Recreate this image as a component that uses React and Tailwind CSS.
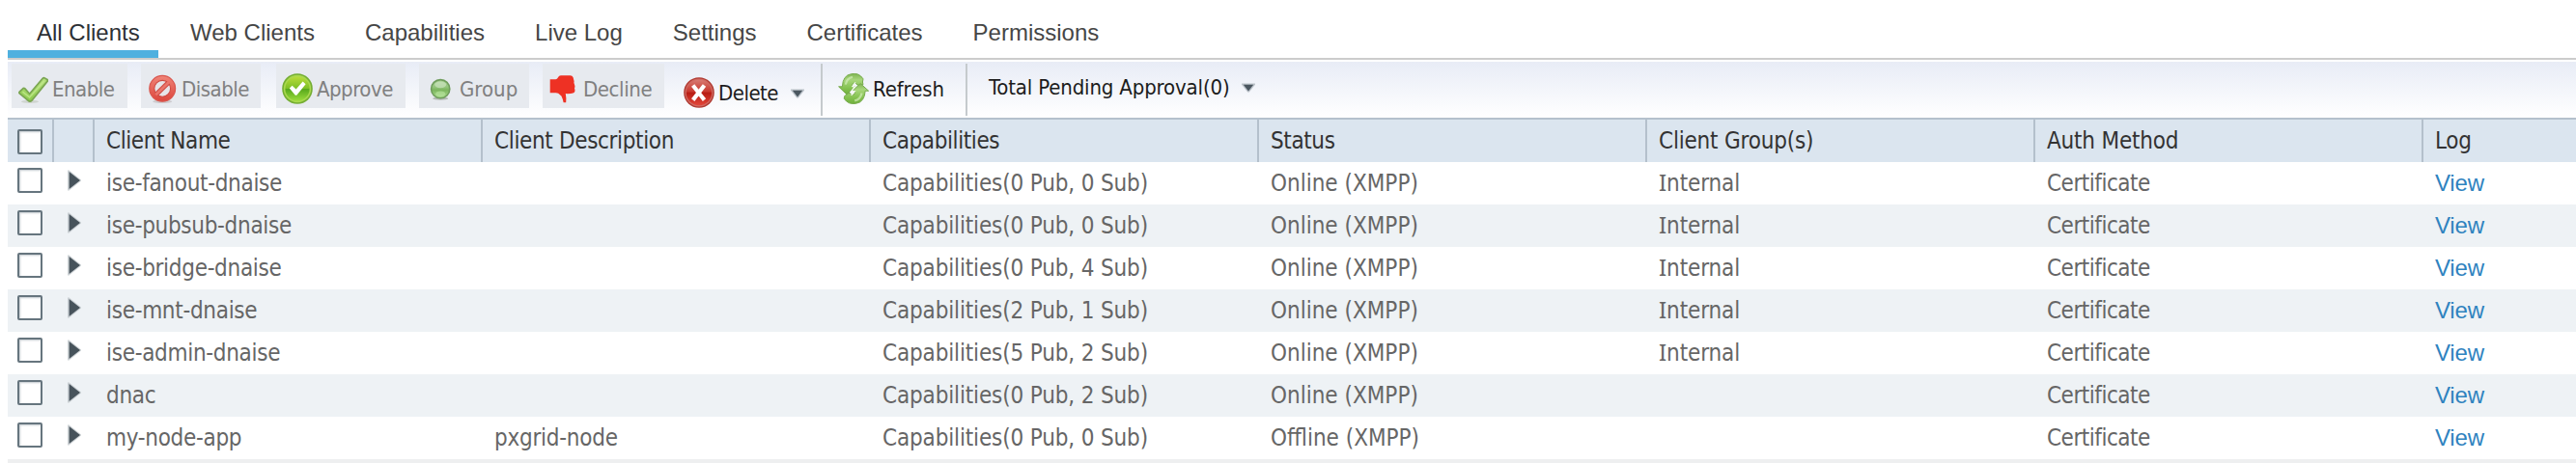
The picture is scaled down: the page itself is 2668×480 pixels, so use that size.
import React from "react";

const TABS = ["All Clients", "Web Clients", "Capabilities", "Live Log", "Settings", "Certificates", "Permissions"];

const COLUMNS = [
  { label: "Client Name", width: "w-[402px]", tracking: "tracking-[-0.43px]" },
  { label: "Client Description", width: "w-[402px]", tracking: "tracking-[-0.35px]" },
  { label: "Capabilities", width: "w-[402px]", tracking: "tracking-[-0.4px]" },
  { label: "Status", width: "w-[402px]", tracking: "tracking-[-0.38px]" },
  { label: "Client Group(s)", width: "w-[402px]", tracking: "tracking-[-0.2px]" },
  { label: "Auth Method", width: "w-[402px]", tracking: "tracking-[-0.2px]" },
  { label: "Log", width: "w-[160px]", tracking: "tracking-[-0.3px]" },
];

const ROWS = [
  { name: "ise-fanout-dnaise", desc: "", caps: "Capabilities(0 Pub, 0 Sub)", status: "Online (XMPP)", internal: true },
  { name: "ise-pubsub-dnaise", desc: "", caps: "Capabilities(0 Pub, 0 Sub)", status: "Online (XMPP)", internal: true },
  { name: "ise-bridge-dnaise", desc: "", caps: "Capabilities(0 Pub, 4 Sub)", status: "Online (XMPP)", internal: true },
  { name: "ise-mnt-dnaise", desc: "", caps: "Capabilities(2 Pub, 1 Sub)", status: "Online (XMPP)", internal: true },
  { name: "ise-admin-dnaise", desc: "", caps: "Capabilities(5 Pub, 2 Sub)", status: "Online (XMPP)", internal: true },
  { name: "dnac", desc: "", caps: "Capabilities(0 Pub, 2 Sub)", status: "Online (XMPP)", internal: false },
  { name: "my-node-app", desc: "pxgrid-node", caps: "Capabilities(0 Pub, 0 Sub)", status: "Offline (XMPP)", internal: false },
];

function EnableIcon() {
  return (
    <svg viewBox="0 0 32 32" className="size-8 shrink-0">
      <defs>
        <linearGradient id="enableFill" x1="0" y1="0" x2="0" y2="1">
          <stop offset="0" stopColor="#b5e07c" />
          <stop offset="1" stopColor="#8ccb4c" />
        </linearGradient>
      </defs>
      <ellipse cx="13" cy="29.4" rx="9" ry="1.6" fill="#cfd4d0" />
      <path d="M2.2 19.2 6 15.6q1-.6 1.900.3l4.700 5.300L26.200 5.300q1-1 2.100-.4l2.600 1.600q.9.8.1 1.900L15 28.200q-2 2-4 0L2.300 21q-.8-.9-.1-1.800z" fill="url(#enableFill)" stroke="#7aa552" strokeWidth="1.7" />
      <path d="M5.400 19.200l7.200 5.600L28 7.600" fill="none" stroke="#c6ea94" strokeWidth="1.6" opacity=".7" />
    </svg>
  );
}

function DisableIcon() {
  return (
    <svg viewBox="0 0 32 32" className="size-8 shrink-0">
      <defs>
        <linearGradient id="disableFill" x1="0" y1="0" x2="0" y2="1">
          <stop offset="0" stopColor="#f08478" />
          <stop offset="1" stopColor="#dc453c" />
        </linearGradient>
      </defs>
      <ellipse cx="16.2" cy="29.3" rx="10" ry="1.8" fill="#cdcbce" />
      <circle cx="16.2" cy="15.8" r="13.4" fill="url(#disableFill)" stroke="#d9574f" strokeWidth="1.2" />
      <circle cx="16.2" cy="15.8" r="8.4" fill="#e7e4e8" stroke="#cf4a42" strokeWidth="1.1" />
      <path d="M10 21.7 22.2 9.7" stroke="#cf4a42" strokeWidth="5" />
      <path d="M9.4 22.3 22.8 9.2" stroke="#ea756b" strokeWidth="2.8" />
    </svg>
  );
}

function ApproveIcon() {
  return (
    <svg viewBox="0 0 32 32" className="size-8 shrink-0">
      <defs>
        <linearGradient id="approveFill" x1="0" y1="0" x2="0" y2="1">
          <stop offset="0" stopColor="#b9dc3a" />
          <stop offset=".5" stopColor="#7cbf26" />
          <stop offset=".52" stopColor="#58a81c" />
          <stop offset="1" stopColor="#9bdc3c" />
        </linearGradient>
      </defs>
      <circle cx="16" cy="16" r="15.8" fill="#74ad32" />
      <circle cx="16" cy="16" r="14.2" fill="#a9d84e" />
      <circle cx="16" cy="16" r="12.6" fill="url(#approveFill)" />
      <path d="M7.800 15.600l2.800-2.800 4 3.800 7-8.200 3 2.800-8.900 11q-1.200 1-2.300 0z" fill="#fff" />
    </svg>
  );
}

function GroupIcon() {
  return (
    <svg viewBox="0 0 32 32" className="size-8 shrink-0">
      <defs>
        <linearGradient id="groupFill" x1="0" y1="0" x2="0" y2="1">
          <stop offset="0" stopColor="#a9d094" />
          <stop offset=".4" stopColor="#93c47b" />
          <stop offset=".55" stopColor="#7cb55e" />
          <stop offset="1" stopColor="#a8dc8c" />
        </linearGradient>
      </defs>
      <ellipse cx="16.2" cy="26.2" rx="8" ry="1.6" fill="#b4b9b5" />
      <circle cx="16.2" cy="16.2" r="9.6" fill="url(#groupFill)" stroke="#6f9d5c" strokeWidth="1.6" />
      <ellipse cx="16.2" cy="11.8" rx="6" ry="3.4" fill="#d3e8c9" opacity=".6" />
      <ellipse cx="16.2" cy="21.2" rx="5" ry="2.8" fill="#bfeaa5" opacity=".55" />
    </svg>
  );
}

function DeclineIcon() {
  return (
    <svg viewBox="0 0 32 32" className="size-8 shrink-0">
      <path d="M1.700 6.200h5.600q1.200 0 2-1l1.200-1.600q1-1.300 2.600-1.300h9.500q2.200 0 3 2l.9 3.400q.3 1-.1 2l1 3.200q.3 1.400-.4 2.400l.4 1.800q.5 2.600-1.900 3.400-2.400.8-7.700.6.9 4.900.4 9.100H15.600q-.7-3.600-2.200-6.600l-3.200-2.800-2.400-.6H1.700z" fill="#ee3124" />
    </svg>
  );
}

function DeleteIcon() {
  return (
    <svg viewBox="0 0 32 32" className="size-8 shrink-0">
      <defs>
        <linearGradient id="deleteFill" x1="0" y1="0" x2="0" y2="1">
          <stop offset="0" stopColor="#d77a72" />
          <stop offset=".45" stopColor="#c93a30" />
          <stop offset=".52" stopColor="#b81d14" />
          <stop offset="1" stopColor="#e2463a" />
        </linearGradient>
      </defs>
      <circle cx="16" cy="16" r="15.8" fill="#b03a32" />
      <circle cx="16" cy="16" r="14.4" fill="#d06a62" />
      <circle cx="16" cy="16" r="13.2" fill="url(#deleteFill)" />
      <path d="M11 10.200 20.200 22M20.200 10.200 11 22" stroke="#fff" strokeWidth="4.200" strokeLinecap="square" />
    </svg>
  );
}

function RefreshIcon() {
  return (
    <svg viewBox="0 0 32 32" className="size-8 shrink-0">
      <defs>
        <linearGradient id="refreshFill" x1="0" y1="0" x2="0" y2="1">
          <stop offset="0" stopColor="#7fb552" />
          <stop offset=".3" stopColor="#a8d67c" />
          <stop offset=".7" stopColor="#84c250" />
          <stop offset="1" stopColor="#6fae3c" />
        </linearGradient>
      </defs>
      <path d="M.6 13.800H4.400Q5 2 13.600.7 21.500-1 26 5.800L25.400 9 26 11.600 20 12.200 18 9.800 15.200 10.800 14.600 13.600 17.400 13.800 9 22Z" fill="url(#refreshFill)" stroke="#78ab4e" strokeWidth="1" />
      <path d="M31.600 18.200H28.200Q27.400 30 18.600 31.300 10.600 32.800 6.200 26.200L6.800 23.400 12 20.200 14.200 22.600 17 21.400 17.600 18.400 14.800 18.200 23.200 10.600Z" fill="url(#refreshFill)" stroke="#78ab4e" strokeWidth="1" />
      <path d="M18 9.400 15 13.600 17.400 14 14 18.400 17.200 18.600 13.600 22.800" fill="none" stroke="#f3f9ee" strokeWidth="1.400" />
      <path d="M7.800 11.600Q9 5 15 3.800M24.600 20.400Q23.200 27 17.200 28.400" fill="none" stroke="#d2ecb8" strokeWidth="2.200" opacity=".7" />
    </svg>
  );
}

function MenuArrow() {
  return (
    <svg viewBox="0 0 14 10" className="h-[10px] w-[14px] shrink-0">
      <path d="M0 .4h14v1.400L7.800 9.600H6.200L0 1.800z" fill="#bcc3ca" />
      <path d="M1.800 1.800h10.400L7 8.600z" fill="#4b5760" />
    </svg>
  );
}

function ExpandArrow() {
  return (
    <svg viewBox="0 0 14 22" className="mt-2 h-[22px] w-[14px]">
      <path d="M0 .6h1.600L14 10.400v1.200L1.600 21.400H0z" fill="#bcc3c8" opacity=".7" />
      <path d="M1.600 2 13 11 1.600 20z" fill="#47535b" />
    </svg>
  );
}

function Checkbox() {
  return <span className="block size-[26px] rounded-[2px] border-2 border-[#66757e] bg-white shadow-[inset_1px_1px_2px_#c3c9ce]" />;
}

function ToolButton({ icon, label, box, text }) {
  return (
    <div className={`flex h-[46px] shrink-0 items-start bg-[#e7eaef] pt-[10px] ${box}`}>
      {icon}
      <span className={`pt-[4px] text-[#808080] ${text}`}>{label}</span>
    </div>
  );
}

function Cell({ width, className = "", children }) {
  return <div className={`shrink-0 pl-[14px] ${width} ${className}`}>{children}</div>;
}

export default function App() {
  return (
    <div className="h-[480px] w-[2668px] overflow-hidden bg-white pl-2 font-['DejaVu_Sans_Condensed','DejaVu_Sans',sans-serif]">
      <nav className="flex h-[62px] border-b-2 border-[#cccccc] font-['Liberation_Sans',Arial,sans-serif] text-[24px] leading-[27px] text-[#464646]">
        <div className="mr-[33px] h-[60px] w-[156px] border-b-8 border-[#4fb0df] pl-[30px] pt-5 whitespace-nowrap text-[#2d3035]">{TABS[0]}</div>
        <div className="flex gap-[52px] pt-5">
          {TABS.slice(1).map((tab) => (
            <span key={tab} className="whitespace-nowrap">{tab}</span>
          ))}
        </div>
      </nav>

      <div className="mt-[2px] flex h-[58px] items-start bg-linear-to-b from-[#e8ecf6] to-white pl-1 pt-[2px] text-[22px] leading-[26px] whitespace-nowrap">
        <ToolButton icon={<EnableIcon />} label="Enable" box="w-[120px] pl-[6px] mr-[14px]" text="pl-[4px] tracking-[-0.5px]" />
        <ToolButton icon={<DisableIcon />} label="Disable" box="w-[124px] pl-[6px] mr-[16px]" text="pl-[4px] tracking-[-0.5px]" />
        <ToolButton icon={<ApproveIcon />} label="Approve" box="w-[134px] pl-[6px] mr-[14px]" text="pl-[4px] tracking-[-0.5px]" />
        <ToolButton icon={<GroupIcon />} label="Group" box="w-[114px] pl-[6px] mr-[14px]" text="pl-[4px]" />
        <ToolButton icon={<DeclineIcon />} label="Decline" box="w-[126px] pl-[6px] mr-[20px]" text="pl-[4px] tracking-[-0.4px]" />
        <div className="flex w-[142px] pt-[14px] text-[#1c1c1c]">
          <DeleteIcon />
          <span className="w-[79px] pl-[4px] pt-[4px] tracking-[-0.5px]">Delete</span>
          <div className="pt-3"><MenuArrow /></div>
        </div>
        <div className="flex h-[54px] w-[152px] border-x-2 border-[#c5cacd] pl-4 pt-[10px] text-[#1c1c1c]">
          <RefreshIcon />
          <span className="pl-[4px] pt-[4px] tracking-[-0.1px]">Refresh</span>
        </div>
        <div className="flex pl-[22px] pt-[12px] text-[#1c1c1c]">
          <span className="w-[262px] tracking-[-0.15px]">Total Pending Approval(0)</span>
          <div className="pt-[8px]"><MenuArrow /></div>
        </div>
      </div>

      <div className="text-[24px] leading-[44px] whitespace-nowrap">
        <div className="flex h-[46px] border-t-2 border-[#b4c0cc] bg-[#dbe5ef] text-[#333333]">
          <div className="w-[48px] shrink-0 border-r-2 border-[#b4c0cc] pl-[10px] pt-[10px]"><Checkbox /></div>
          <div className="w-[40px] shrink-0" />
          {COLUMNS.map((c) => (
            <div key={c.label} className={`shrink-0 border-l-2 border-[#b4c0cc] pl-[12px] ${c.width} ${c.tracking}`}>{c.label}</div>
          ))}
        </div>
        <div>
          {ROWS.map((r) => (
            <div key={r.name} className="flex h-[44px] bg-white text-[#666666] even:bg-[#eef2f5]">
              <div className="w-[62px] shrink-0 pl-[10px] pt-[6px]"><Checkbox /></div>
              <div className="w-[26px] shrink-0"><ExpandArrow /></div>
              <Cell width="w-[402px]" className="tracking-[-0.3px]">{r.name}</Cell>
              <Cell width="w-[402px]" className="tracking-[-0.25px]">{r.desc}</Cell>
              <Cell width="w-[402px]" className="tracking-[-0.15px]">{r.caps}</Cell>
              <Cell width="w-[402px]">{r.status}</Cell>
              <Cell width="w-[402px]" className="tracking-[-0.1px]">
                {r.internal && <><span className="font-['Noto_Sans',sans-serif] leading-none">I</span>nternal</>}
              </Cell>
              <Cell width="w-[402px]" className="tracking-[-0.48px]">Certificate</Cell>
              <Cell width="w-[160px]" className="font-['Liberation_Sans',Arial,sans-serif] tracking-[-0.2px] text-[#2f83bf]">View</Cell>
            </div>
          ))}
        </div>
        <div className="h-1 bg-[#eeeff0]" />
      </div>
    </div>
  );
}
